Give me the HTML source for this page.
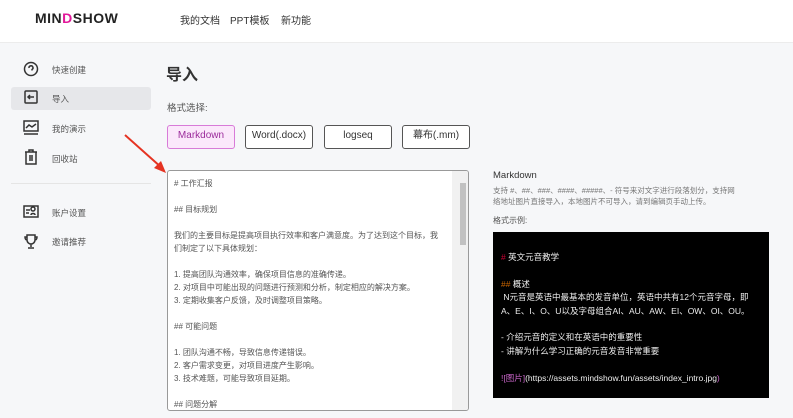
<html><head><style>
body{margin:0;width:793px;height:418px;overflow:hidden;background:#f6f7f9;font-family:"Liberation Sans","Noto Sans CJK SC",sans-serif;position:relative}
.a{position:absolute;white-space:nowrap}
.hdr{position:absolute;left:0;top:0;width:793px;height:42px;background:#fff;border-bottom:1px solid #ececec}
.nav{font-size:10px;color:#333}
.side{font-size:8.5px;color:#555}
.box{position:absolute;top:125px;width:66px;height:22px;border:1px solid #555;border-radius:3px;background:#fff}
.bt{position:absolute;top:130px;width:68px;text-align:center;font-size:10px;line-height:12px;color:#333}
.ta{position:absolute;left:167px;top:170px;width:300px;height:239px;background:#fff;border:1px solid #999;border-radius:3px;overflow:hidden;font-size:8px;color:#555;line-height:13px}
.ta div{padding-left:6px}
.blk{position:absolute;left:493px;top:232px;width:276px;height:166px;background:#000;color:#eee;font-size:8.5px;line-height:13.5px}
</style></head><body>
<div class="hdr"></div>
<div class="a" style="left:35px;top:10px;font-size:14px;font-weight:bold;color:#222;letter-spacing:0.5px">MIN<span style="color:#e2189a">D</span>SHOW</div>
<div class="a nav" style="left:180px;top:12px">我的文档</div>
<div class="a nav" style="left:230px;top:12px">PPT模板</div>
<div class="a nav" style="left:281px;top:12px">新功能</div>

<div style="position:absolute;left:11px;top:87px;width:140px;height:23px;background:#e6e7ea;border-radius:3px"></div>
<svg class="a" style="left:22px;top:60px" width="18" height="200" viewBox="0 0 18 200" fill="none" stroke="#333" stroke-width="1.5">
<circle cx="9" cy="9" r="6.5"/><path d="M7 8a2 2 0 1 1 3 1.5v1"/>
<rect x="3" y="31" width="12" height="12" rx="1"/><path d="M12 37H6m2-2-2 2 2 2"/>
<rect x="2" y="61" width="14" height="10"/><path d="M4 68l3-3 3 2 4-3M2 74h14"/>
<path d="M3 92h12M7 92v-2h4v2M4 92v12h10V92M8 95v6m2-6v6"/>
<rect x="2" y="146" width="14" height="11"/><circle cx="11" cy="149" r="2"/><path d="M4 150h4M4 153h3M9 155c0-2 4-2 4 0"/>
<path d="M5 175h8v5a4 4 0 0 1-8 0zM5 177H3c0 2 1 3 2 3M13 177h2c0 2-1 3-2 3M9 184v3M6 188h6"/>
</svg>
<div class="a side" style="left:52px;top:64px">快速创建</div>
<div class="a side" style="left:52px;top:93px">导入</div>
<div class="a side" style="left:52px;top:123px">我的演示</div>
<div class="a side" style="left:52px;top:153px">回收站</div>
<div style="position:absolute;left:11px;top:183px;width:140px;height:1px;background:#e5e5e5"></div>
<div class="a side" style="left:52px;top:207px">账户设置</div>
<div class="a side" style="left:52px;top:236px">邀请推荐</div>

<div class="a" style="left:166px;top:61px;font-size:16px;font-weight:bold;color:#333">导入</div>
<div class="a" style="left:167px;top:100px;font-size:9.5px;color:#555">格式选择:</div>
<div class="box" style="left:167px;border-color:#d87bd8;background:#fbe8fb"></div>
<div class="box" style="left:245px"></div>
<div class="box" style="left:324px"></div>
<div class="box" style="left:402px"></div>
<div class="bt" style="left:167px;color:#9b2b9b">Markdown</div>
<div class="bt" style="left:245px">Word(.docx)</div>
<div class="bt" style="left:324px">logseq</div>
<div class="bt" style="left:402px">幕布(.mm)</div>

<div class="ta">
<div style="margin-top:6px">#&nbsp;工作汇报</div><div>&nbsp;</div>
<div>## 目标规划</div><div>&nbsp;</div>
<div>我们的主要目标是提高项目执行效率和客户满意度。为了达到这个目标，我</div>
<div>们制定了以下具体规划：</div><div>&nbsp;</div>
<div>1. 提高团队沟通效率，确保项目信息的准确传递。</div>
<div>2. 对项目中可能出现的问题进行预测和分析，制定相应的解决方案。</div>
<div>3. 定期收集客户反馈，及时调整项目策略。</div><div>&nbsp;</div>
<div>## 可能问题</div><div>&nbsp;</div>
<div>1. 团队沟通不畅，导致信息传递错误。</div>
<div>2. 客户需求变更，对项目进度产生影响。</div>
<div>3. 技术难题，可能导致项目延期。</div><div>&nbsp;</div>
<div>## 问题分解</div>
<div style="position:absolute;right:0;top:0;width:10px;height:239px;background:#f1f1f1"></div>
<div style="position:absolute;right:2px;top:12px;width:6px;height:62px;background:#c1c1c1;padding:0"></div>
</div>

<div class="a" style="left:493px;top:170px;font-size:9.5px;color:#333">Markdown</div>
<div class="a" style="left:493px;top:186px;font-size:7.5px;color:#777;line-height:10.5px">支持 #、##、###、####、#####、- 符号来对文字进行段落划分，支持网<br>络地址图片直接导入，本地图片不可导入，请到编辑页手动上传。</div>
<div class="a" style="left:493px;top:215px;font-size:8px;color:#555">格式示例:</div>
<div class="blk">
<div style="position:absolute;left:8px;top:19px"><span style="color:#c03">#</span> 英文元音教学</div>
<div style="position:absolute;left:8px;top:46px"><span style="color:#c60">##</span> 概述</div>
<div style="position:absolute;left:8px;top:59px">&nbsp;N元音是英语中最基本的发音单位，英语中共有12个元音字母，即</div>
<div style="position:absolute;left:8px;top:73px">A、E、I、O、U以及字母组合AI、AU、AW、EI、OW、OI、OU。</div>
<div style="position:absolute;left:8px;top:99px">- 介绍元音的定义和在英语中的重要性</div>
<div style="position:absolute;left:8px;top:113px">- 讲解为什么学习正确的元音发音非常重要</div>
<div style="position:absolute;left:8px;top:140px"><span style="color:#c6c">![图片]</span>(https://assets.mindshow.fun/assets/index_intro.jpg<span style="color:#c6c">)</span></div>
</div>

<svg class="a" style="left:120px;top:130px" width="50" height="48"><path d="M5 5L42 38" stroke="#e53322" stroke-width="2"/><path d="M46 43L34 38L41 31Z" fill="#e53322"/></svg>
</body></html>
